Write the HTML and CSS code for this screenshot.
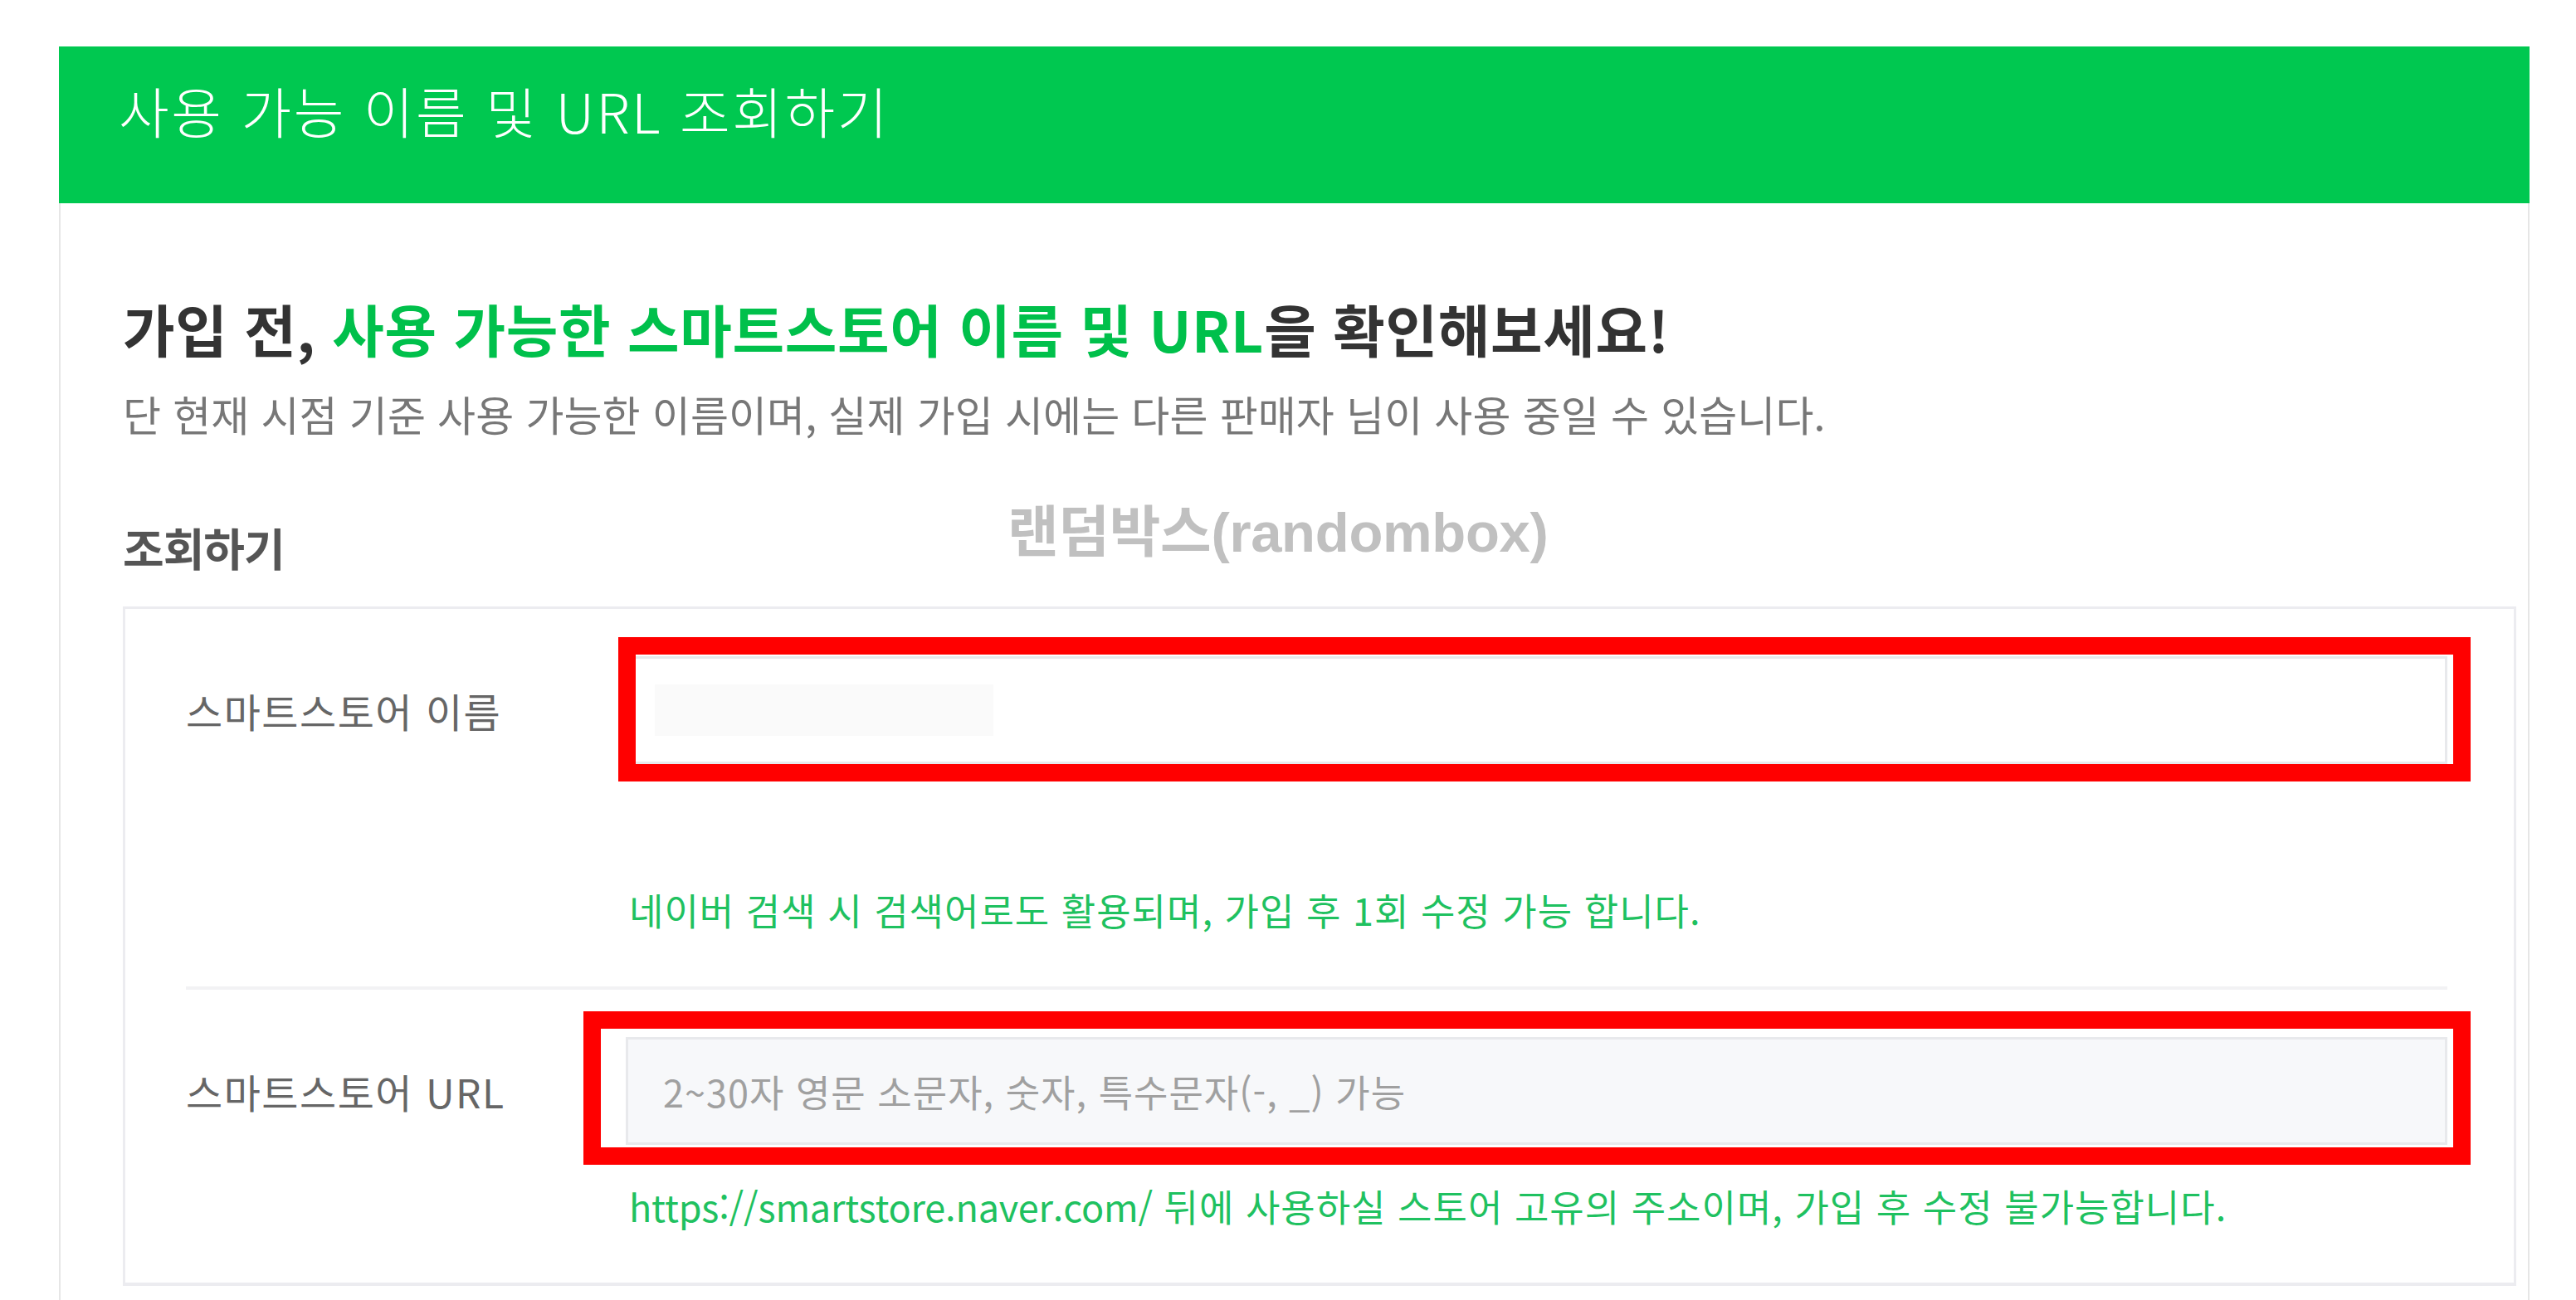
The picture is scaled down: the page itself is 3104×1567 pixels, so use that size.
FILE: index.html
```html
<!DOCTYPE html>
<html lang="ko">
<head>
    <meta charset="UTF-8">
    <meta name="viewport" content="width=device-width, initial-scale=1.0">
    <title>사용 가능 이름 및 URL 조회하기</title>
    <link rel="stylesheet" href="styles.css">
</head>
<body>

    <div class="card">
        <div class="card-head">
            <h1>사용 가능 이름 및 URL 조회하기</h1>
        </div>

        <div class="card-body">
            <h2 class="intro">가입 전, <span class="green">사용 가능한 스마트스토어 이름 및 URL</span>을 확인해보세요!</h2>
            <p class="notice">단 현재 시점 기준 사용 가능한 이름이며, 실제 가입 시에는 다른 판매자 님이 사용 중일 수 있습니다.</p>

            <div class="search-title">
                <h3>조회하기</h3>
                <span class="watermark">랜덤박스<span class="latin">(randombox)</span></span>
            </div>

            <div class="form-box">
                <div class="row">
                    <label class="label">스마트스토어 이름</label>
                    <div class="field">
                        <div class="input-wrap">
                            <div class="input input-name"><span class="blurred"></span></div>
                            <div class="mark mark-name"></div>
                        </div>
                        <p class="help help-name">네이버 검색 시 검색어로도 활용되며, 가입 후 1회 수정 가능 합니다.</p>
                    </div>
                </div>

                <div class="row row-url">
                    <label class="label">스마트스토어 URL</label>
                    <div class="field">
                        <div class="input-wrap">
                            <div class="input input-url">2~30자 영문 소문자, 숫자, 특수문자(-, _) 가능</div>
                            <div class="mark mark-url"></div>
                        </div>
                        <p class="help"><span class="url">https://smartstore.naver.com/</span> 뒤에 사용하실 스토어 고유의 주소이며, 가입 후 수정 불가능합니다.</p>
                    </div>
                </div>
            </div>
        </div>
    </div>

</body>
</html>
```

FILE: styles.css
```css
* {
    padding: 0;
    margin: 0;
    box-sizing: border-box;
}

body {
    background-color: white;
    font-family: "Noto Sans CJK KR", "Noto Sans", sans-serif;
    color: #333;
    height: 1567px;
    overflow: hidden;
}

.card {
    margin-top: 56px;
    margin-left: 71px;
    width: 2977px;
    height: 1520px;
    border-left: 2px solid #e6e6e6;
    border-right: 2px solid #e6e6e6;
}

.card-head {
    background-color: #00c850;
    height: 189px;
    padding-left: 72px;
    display: flex;
    align-items: center;
    margin-left: -2px;
    margin-right: -2px;
}

.card-head h1 {
    color: white;
    font-size: 66px;
    font-weight: 300;
    letter-spacing: 2.5px;
    margin-top: -38px;
}

.card-body {
    padding: 106px 14px 0 75px;
}

.intro {
    font-size: 68px;
    font-weight: 700;
    color: #333;
    line-height: 90px;
    letter-spacing: 0.7px;
}

.green {
    color: #00c04b;
}

.notice {
    font-size: 50px;
    color: #777;
    line-height: 70px;
    letter-spacing: 0.1px;
    margin-top: 22px;
}

.search-title {
    position: relative;
    margin-top: 92px;
    height: 106px;
}

.search-title h3 {
    font-size: 54px;
    font-weight: 700;
    color: #555;
    letter-spacing: -1px;
    line-height: 70px;
}

/* watermark stamped over the capture */
.watermark {
    position: absolute;
    left: 1066px;
    top: -38px;
    font-family: "Liberation Sans", Arial, "Noto Sans CJK KR", sans-serif;
    font-weight: 700;
    font-size: 67px;
    color: #c0c0c0;
    letter-spacing: -0.3px;
}

.form-box {
    border: 3px solid #ececf0;
    border-bottom-width: 4px;
    width: 2884px;
    padding: 57px 80px 62px 73px;
}

.row {
    display: flex;
}

.row-url {
    border-top: 4px solid #f2f2f4;
    padding-top: 57px;
}

.label {
    width: 530px;
    flex-shrink: 0;
    font-size: 48px;
    color: #666;
    letter-spacing: 1.5px;
    line-height: 130px;
}

.input-wrap {
    position: relative;
}

.field {
    flex: 1;
}

.input {
    height: 130px;
    border: 3px solid #e8e9ec;
    background-color: white;
    font-size: 45px;
    color: #a0a0a0;
    letter-spacing: 1px;
    padding-left: 42px;
    display: flex;
    align-items: center;
}

.input-url {
    background-color: #f7f8fa;
}

.blurred {
    width: 408px;
    height: 62px;
    margin-left: -10px;
    background-color: #fafafa;
}

.mark {
    position: absolute;
    border: 21px solid #ff0000;
}

.mark-name {
    left: -9px;
    right: -28px;
    top: -23px;
    bottom: -21px;
}

.mark-url {
    left: -51px;
    right: -28px;
    top: -31px;
    bottom: -24px;
}

.help {
    font-size: 45px;
    color: #1fc160;
    letter-spacing: 1px;
    line-height: 60px;
    padding-left: 4px;
}

.help .url {
    letter-spacing: -0.2px;
}

.help-name {
    margin-top: 146px;
    margin-bottom: 62px;
}

.row-url .help {
    margin-top: 44px;
}
```
